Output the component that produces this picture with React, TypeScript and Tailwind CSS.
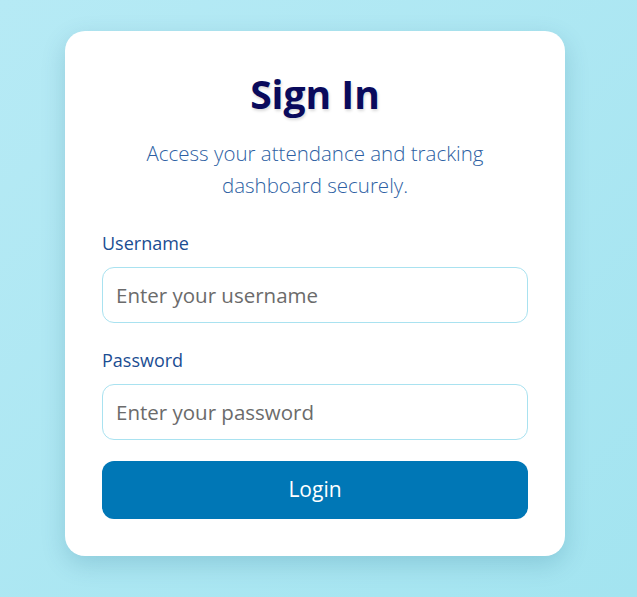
import React from 'react';

export default function App() {
  return (
    <div
      className="min-h-[597px] w-full bg-gradient-to-br from-[#b6eaf5] to-[#a3e4f0] flex justify-center pt-[31px] pr-[7px]"
      style={{ fontFamily: '"Open Sans", "Noto Sans", sans-serif' }}
    >
      <div className="w-[500px] h-[525px] bg-white rounded-[20px] shadow-[0_8px_24px_rgba(0,80,110,0.18)] px-[37px] pt-[38px]">
        <h1
          className="text-center text-[39px] leading-[50px] font-bold text-[#0a0a5c]"
          style={{ textShadow: '1px 2px 3px rgba(0,0,0,0.15)' }}
        >
          Sign In
        </h1>
        <p className="mt-[18px] text-center text-[20.5px] leading-[32px] font-light text-[#2d5fa3] px-[10px]">
          Access your attendance and tracking dashboard securely.
        </p>
        <div className="mt-[30px] flex flex-col">
          <label className="text-[18px] leading-[24px] text-[#1b4d92]">Username</label>
          <input
            className="mt-[12px] h-[56px] w-full rounded-[12px] border border-[#a9e2f0] px-[13px] text-[20.5px] text-[#333] placeholder:text-[#6b6b6b] outline-none"
            placeholder="Enter your username"
          />
          <label className="mt-[25px] text-[18px] leading-[24px] text-[#1b4d92]">Password</label>
          <input
            type="password"
            className="mt-[12px] h-[56px] w-full rounded-[12px] border border-[#a9e2f0] px-[13px] text-[20.5px] text-[#333] placeholder:text-[#6b6b6b] outline-none"
            placeholder="Enter your password"
          />
          <button className="mt-[21px] h-[58px] w-full rounded-[12px] bg-[#0077b6] text-white text-[21px]">
            Login
          </button>
        </div>
      </div>
    </div>
  );
}
